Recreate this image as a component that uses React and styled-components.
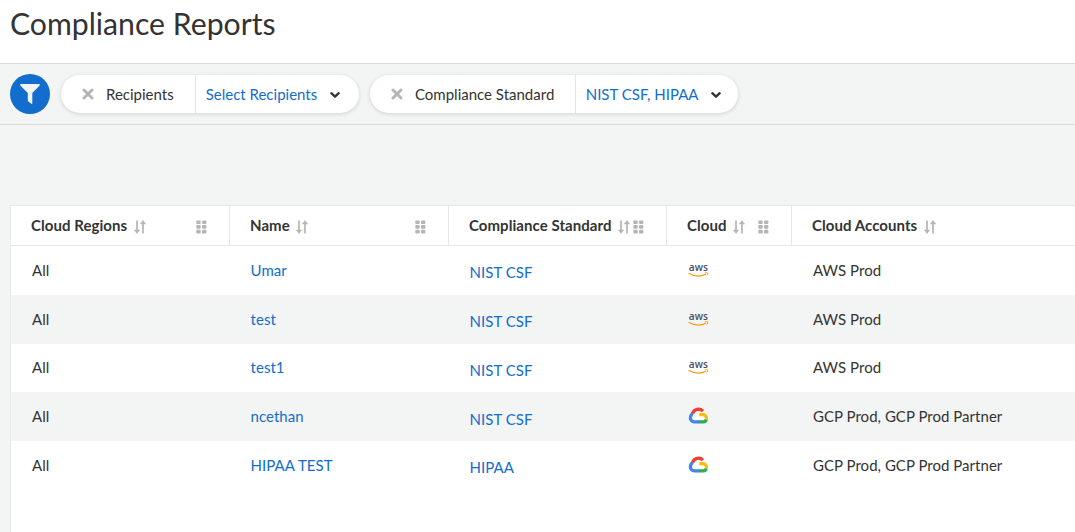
import React from 'react';
import styled, { createGlobalStyle } from 'styled-components';

const GlobalStyle = createGlobalStyle`
  *, *::before, *::after { box-sizing: border-box; }
  body {
    margin: 0;
    background: #f3f5f5;
    color: #333;
    font: 15px/20px Lato, "Liberation Sans", sans-serif;
    overflow: hidden;
  }
`;

const Page = styled.div`
  display: flex;
  flex-direction: column;
  height: 532px;
  overflow: hidden;
`;

const Header = styled.header`
  height: 63px;
  flex: none;
  padding: 5px 10px 0;
  background: #fff;
`;

const Title = styled.h1`
  margin: 0;
  font-size: 30.2px;
  line-height: 36px;
  font-weight: 400;
`;

const FilterBar = styled.section`
  display: flex;
  align-items: center;
  flex: none;
  height: 62px;
  padding: 0 10px;
  border-top: 1px solid #d8dbdb;
  border-bottom: 1px solid #d8dbdb;
`;

const FilterButton = styled.button`
  display: grid;
  place-items: center;
  width: 40px;
  height: 40px;
  padding: 0;
  border: 0;
  border-radius: 50%;
  background: #126dcd;
`;

const Pill = styled.div`
  display: flex;
  width: ${({ $width }) => $width}px;
  height: 38px;
  margin-left: 11px;
  border-radius: 19px;
  background: #fff;
  box-shadow: 0 1px 4px rgba(0, 0, 0, 0.15);
`;

const PillLabel = styled.div`
  display: flex;
  align-items: center;
  width: ${({ $width }) => $width}px;
  padding-left: 21.3px;
  gap: 11.7px;
  border-right: 1px solid #e4e6e6;
  white-space: nowrap;
`;

const PillValue = styled.div`
  display: flex;
  align-items: center;
  padding-left: 9.7px;
  gap: 11.7px;
  color: #126dcd;
  white-space: nowrap;
`;

const Table = styled.main`
  flex: 1;
  width: 1080px;
  margin: 80px 0 0 10px;
  border: 1px solid #e7e8e8;
  border-bottom: 0;
  background: #fff;
`;

const Row = styled.div`
  display: grid;
  grid-template-columns: 219px 219px 218px 125px 1fr;
  height: 48.75px;
  background: ${({ $striped }) => ($striped ? '#f3f5f5' : '#fff')};
`;

const HeadRow = styled(Row)`
  height: 40px;
  border-bottom: 1px solid #e7e8e8;
`;

const HeadCell = styled.div`
  display: flex;
  align-items: center;
  padding: 0 22px 2px 20px;
  border-right: 1px solid #e7e8e8;
  font-weight: 700;
  letter-spacing: 0.06px;
  white-space: nowrap;

  svg { flex: none; margin-top: 5px; }
`;

const SortGlyph = styled.svg`
  margin-left: 6.5px;
`;

const Grip = styled.span`
  display: flex;
  margin-left: auto;
`;

const Cell = styled.div`
  display: flex;
  align-items: center;
  padding: ${({ $drop }) => ($drop ? 4 : 0)}px 0 ${({ $drop }) => ($drop ? 0 : 0.8)}px ${({ $link }) => ($link ? 20.6 : 21)}px;
  color: ${({ $link }) => ($link ? '#126dcd' : '#333')};
  letter-spacing: 0.03px;
  white-space: nowrap;
`;

const LogoText = styled.text`
  font: 600 11px "Open Sans", sans-serif;
  fill: #465063;
`;

const FunnelIcon = () => (
  <svg width="20" height="20" viewBox="0 0 20 20">
    <path d="M.6 0h18.8q.8 0 .3.7v.8L12.3 9v10.3q0 .9-.9.5L8.3 17.6q-.5-.3-.5-.8V9L.3 1.5V.7Q-.2 0 .6 0z" fill="#f3f5f5" />
  </svg>
);

const CloseIcon = () => (
  <svg width="12" height="12" viewBox="0 0 12 12">
    <path d="M2 2l8 8M10 2l-8 8" stroke="#b5b5b5" strokeWidth="2.9" strokeLinecap="round" />
  </svg>
);

const ChevronIcon = () => (
  <svg width="12" height="12" viewBox="0 0 12 12">
    <path d="M2.3 5.2L6 8.7l3.7-3.5" fill="none" stroke="#333" strokeWidth="2.3" strokeLinecap="round" strokeLinejoin="round" />
  </svg>
);

const SortIcon = () => (
  <SortGlyph width="12" height="14" viewBox="0 0 12 14">
    <path d="M3 .5v11M9 13.5v-11" stroke="#b5b5b5" strokeWidth="1.7" />
    <path d="M.3 10h5.4L3 13.6zM6.3 4h5.4L9 .4z" fill="#b5b5b5" stroke="#b5b5b5" strokeWidth=".5" strokeLinejoin="round" />
  </SortGlyph>
);

const GripIcon = () => (
  <svg width="11" height="14" viewBox="0 0 11 14" fill="#b5b5b5">
    {[0.4, 5.1, 9.8].map((y) => (
      <React.Fragment key={y}>
        <rect x=".3" y={y} width="4.4" height="3.7" rx="1" />
        <rect x="6" y={y} width="4.4" height="3.7" rx="1" />
      </React.Fragment>
    ))}
  </svg>
);

const AwsLogo = () => (
  <svg width="22" height="22" viewBox="0 -4 22 22">
    <LogoText x="0.8" y="8.2" textLength="19" lengthAdjust="spacingAndGlyphs">aws</LogoText>
    <path d="M.6 10.3q8.9 5 17.3 1" fill="none" stroke="#f90" strokeWidth="1.2" />
    <path d="M16.8 9.9q2.7-.6 3 .1t-1 2.6" fill="none" stroke="#f90" strokeWidth=".9" />
  </svg>
);

const GoogleCloudLogo = () => (
  <svg width="22" height="18" viewBox="0 0 22 18" fill="none" strokeWidth="3.3">
    <path d="M5 7.6 12 7 16 10 15 13H6L3.5 10Z" fill="#fff" />
    <path d="M11 14.9H6.2A3.9 3.9 0 0 1 2.4 11Q2.4 8.3 4.6 6.2" stroke="#4285f4" />
    <path d="M4.6 6.6A6.2 6.2 0 0 1 15 4.2" stroke="#ea4335" />
    <path d="M11.3 7.7h4a3.4 3.4 0 0 1 3 4.3" stroke="#fbbc05" />
    <path d="M10.5 14.9h4.9a3.4 3.4 0 0 0 2.9-2.6" stroke="#34a853" />
  </svg>
);

const columns = ['Cloud Regions', 'Name', 'Compliance Standard', 'Cloud', 'Cloud Accounts'];

const reports = [
  { name: 'Umar', standard: 'NIST CSF', cloud: 'aws', accounts: 'AWS Prod' },
  { name: 'test', standard: 'NIST CSF', cloud: 'aws', accounts: 'AWS Prod' },
  { name: 'test1', standard: 'NIST CSF', cloud: 'aws', accounts: 'AWS Prod' },
  { name: 'ncethan', standard: 'NIST CSF', cloud: 'gcp', accounts: 'GCP Prod, GCP Prod Partner' },
  { name: 'HIPAA TEST', standard: 'HIPAA', cloud: 'gcp', accounts: 'GCP Prod, GCP Prod Partner' },
];

const Filter = ({ label, value, width, labelWidth }) => (
  <Pill $width={width}>
    <PillLabel $width={labelWidth}><CloseIcon />{label}</PillLabel>
    <PillValue>{value}<ChevronIcon /></PillValue>
  </Pill>
);

export default function App() {
  return (
    <Page>
      <GlobalStyle />
      <Header><Title>Compliance Reports</Title></Header>
      <FilterBar>
        <FilterButton aria-label="Filters"><FunnelIcon /></FilterButton>
        <Filter label="Recipients" value="Select Recipients" width={298} labelWidth={135} />
        <Filter label="Compliance Standard" value="NIST CSF, HIPAA" width={368} labelWidth={206} />
      </FilterBar>
      <Table>
        <HeadRow>
          {columns.map((column, i) => (
            <HeadCell key={column}>
              {column}
              <SortIcon />
              {i < 4 && <Grip><GripIcon /></Grip>}
            </HeadCell>
          ))}
        </HeadRow>
        {reports.map((report, i) => (
          <Row key={report.name} $striped={i % 2 === 1}>
            <Cell>All</Cell>
            <Cell $link>{report.name}</Cell>
            <Cell $link $drop>{report.standard}</Cell>
            <Cell>{report.cloud === 'aws' ? <AwsLogo /> : <GoogleCloudLogo />}</Cell>
            <Cell>{report.accounts}</Cell>
          </Row>
        ))}
      </Table>
    </Page>
  );
}
